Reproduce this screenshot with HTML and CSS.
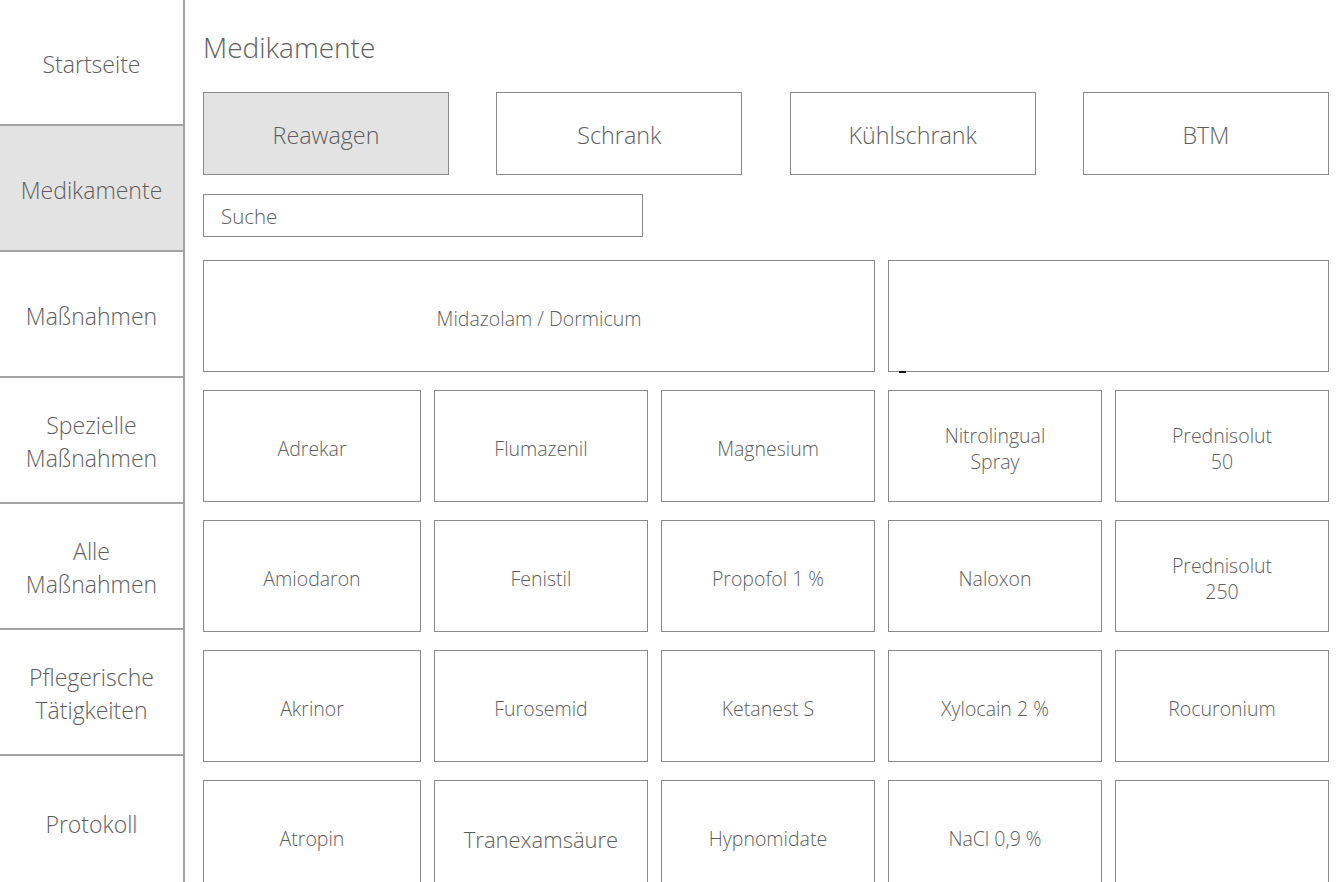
FILE: index.html
```html
<!DOCTYPE html>
<html lang="de">
<head>
<meta charset="utf-8">
<title>Medikamente</title>
<link rel="stylesheet" href="styles.css">
</head>
<body>
<div class="app">
  <nav class="sidebar">
    <div class="nav-item">Startseite</div>
    <div class="nav-item active">Medikamente</div>
    <div class="nav-item">Maßnahmen</div>
    <div class="nav-item">Spezielle<br>Maßnahmen</div>
    <div class="nav-item">Alle<br>Maßnahmen</div>
    <div class="nav-item">Pflegerische<br>Tätigkeiten</div>
    <div class="nav-item last">Protokoll</div>
  </nav>
  <main class="main">
    <h1 class="title">Medikamente</h1>
    <div class="tabs">
      <div class="tab active">Reawagen</div>
      <div class="tab">Schrank</div>
      <div class="tab">Kühlschrank</div>
      <div class="tab">BTM</div>
    </div>
    <div class="search">Suche</div>
    <div class="grid">
      <div class="cell span3">Midazolam / Dormicum</div>
      <div class="cell span2"><span class="cursor"></span></div>

      <div class="cell">Adrekar</div>
      <div class="cell">Flumazenil</div>
      <div class="cell">Magnesium</div>
      <div class="cell">Nitrolingual<br>Spray</div>
      <div class="cell">Prednisolut<br>50</div>

      <div class="cell">Amiodaron</div>
      <div class="cell">Fenistil</div>
      <div class="cell">Propofol 1 %</div>
      <div class="cell">Naloxon</div>
      <div class="cell">Prednisolut<br>250</div>

      <div class="cell">Akrinor</div>
      <div class="cell">Furosemid</div>
      <div class="cell">Ketanest S</div>
      <div class="cell">Xylocain 2 %</div>
      <div class="cell">Rocuronium</div>

      <div class="cell">Atropin</div>
      <div class="cell big">Tranexamsäure</div>
      <div class="cell">Hypnomidate</div>
      <div class="cell">NaCl 0,9 %</div>
      <div class="cell"></div>
    </div>
  </main>
</div>
</body>
</html>
```

FILE: styles.css
```css
html, body {
  margin: 0;
  padding: 0;
  background: #ffffff;
  overflow: hidden;
  height: 882px;
}

body {
  font-family: "Open Sans", "Noto Sans", sans-serif;
  font-weight: 300;
  color: #5e5e5e;
}

.app {
  display: flex;
  align-items: stretch;
  min-height: 882px;
}

.sidebar {
  width: 183px;
  flex: 0 0 183px;
  border-right: 2px solid #a3a3a3;
  display: flex;
  flex-direction: column;
}

.nav-item {
  height: 120px;
  border-bottom: 2px solid #a3a3a3;
  display: flex;
  align-items: center;
  justify-content: center;
  text-align: center;
  font-size: 23px;
  line-height: 33px;
  padding-top: 4px;
  box-sizing: content-box;
}

.nav-item:first-child {
  height: 119px;
  padding-top: 5px;
}

.nav-item.active {
  background: #e3e3e3;
}

.nav-item.last {
  border-bottom: none;
  height: 120px;
  padding-top: 8px;
}

.main {
  flex: 1;
  padding: 0 13px 0 18px;
  position: relative;
}

.title {
  margin: 30px 0 0 0;
  font-size: 28px;
  font-weight: 300;
  line-height: 34px;
}

.tabs {
  margin-top: 28px;
  display: flex;
  justify-content: space-between;
}

.tab {
  width: 244px;
  height: 79px;
  padding-top: 2px;
  box-sizing: content-box;
  border: 1px solid #8a8a8a;
  display: flex;
  align-items: center;
  justify-content: center;
  font-size: 23.3px;
}

.tab.active {
  background: #e3e3e3;
}

.search {
  margin-top: 19px;
  width: 421px;
  height: 41px;
  border: 1px solid #8a8a8a;
  display: flex;
  align-items: center;
  padding-left: 17px;
  font-size: 20.5px;
}

.grid {
  margin-top: 23px;
  display: grid;
  grid-template-columns: 218px repeat(4, 214px);
  grid-auto-rows: 112px;
  column-gap: 13px;
  row-gap: 18px;
}

.cell {
  border: 1px solid #8a8a8a;
  display: flex;
  align-items: center;
  justify-content: center;
  text-align: center;
  font-size: 19.5px;
  line-height: 26px;
  position: relative;
  padding-top: 6px;
}

.cell.span3 {
  grid-column: span 3;
}

.cell.span2 {
  grid-column: span 2;
}

.cell.big {
  font-size: 22px;
}

.cursor {
  position: absolute;
  left: 10px;
  bottom: -2px;
  width: 7px;
  height: 2px;
  background: #111111;
}
```
